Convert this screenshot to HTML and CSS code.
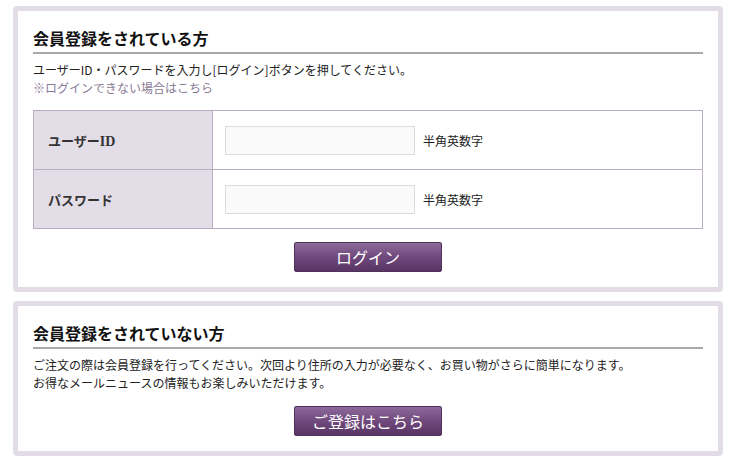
FILE: index.html
```html
<!DOCTYPE html>
<html lang="ja">
<head>
<meta charset="utf-8">
<title>ログイン</title>
<link rel="stylesheet" href="styles.css">
</head>
<body>
<div class="page">
  <section class="box">
    <h2 class="box-title">会員登録をされている方</h2>
    <p class="lead">ユーザーID・パスワードを入力し[ログイン]ボタンを押してください。<br><a class="note-link" href="#">※ログインできない場合はこちら</a></p>
    <table class="login-table">
      <tr>
        <th>ユーザー<span class="latin">ID</span></th>
        <td><input class="field" type="text"><span class="hint">半角英数字</span></td>
      </tr>
      <tr>
        <th>パスワード</th>
        <td><input class="field" type="password"><span class="hint">半角英数字</span></td>
      </tr>
    </table>
    <div class="actions actions-login"><button class="btn" type="button">ログイン</button></div>
  </section>
  <section class="box">
    <h2 class="box-title">会員登録をされていない方</h2>
    <p class="lead">ご注文の際は会員登録を行ってください。次回より住所の入力が必要なく、お買い物がさらに簡単になります。<br>お得なメールニュースの情報もお楽しみいただけます。</p>
    <div class="actions actions-register"><button class="btn" type="button">ご登録はこちら</button></div>
  </section>
</div>
</body>
</html>
```
FILE: styles.css
```css
html, body {
  margin: 0;
  padding: 0;
  background: #fff;
}
body {
  font-family: "Noto Sans CJK JP", "Noto Sans", sans-serif;
  color: #222;
  font-size: 12px;
}
.page {
  padding: 6px 8px 0 13px;
  display: flex;
  flex-direction: column;
  gap: 9px;
}
.box {
  border: 5px solid #e2dce6;
  border-radius: 4px;
  background: #fff;
  padding: 16px 15px 15px;
}
.box-title {
  margin: 0;
  font-size: 16px;
  line-height: 23px;
  font-weight: bold;
  color: #111;
  padding-bottom: 2px;
  border-bottom: 2px solid #a9a9a9;
}
.lead {
  margin: 7px 0 0;
  line-height: 18px;
  font-size: 12px;
  color: #222;
}
.note-link {
  color: #8a7a96;
  text-decoration: none;
}
.login-table {
  width: 100%;
  margin-top: 13px;
  border-collapse: collapse;
  border: 1px solid #b8aec0;
}
.login-table th,
.login-table td {
  border: 1px solid #b8aec0;
  height: 58px;
  padding: 0;
  vertical-align: middle;
}
.login-table th {
  width: 164px;
  background: #e3dde7;
  text-align: left;
  padding-left: 14px;
  font-size: 13px;
  font-weight: bold;
  color: #333;
}
.latin {
  font-family: "Liberation Serif", serif;
  font-size: 14px;
}
.login-table td {
  padding-left: 12px;
}
.field {
  box-sizing: border-box;
  width: 190px;
  height: 29px;
  border: 1px solid #dcdcdc;
  background: #fafafa;
  vertical-align: middle;
  margin: 0;
}
.hint {
  margin-left: 8px;
  vertical-align: middle;
  font-size: 12px;
  color: #222;
}
.actions {
  display: flex;
  justify-content: center;
}
.actions-login {
  margin-top: 13px;
}
.actions-register {
  margin-top: 14px;
}
.btn {
  box-sizing: border-box;
  width: 148px;
  height: 30px;
  border: 1px solid #4f3159;
  border-radius: 2px;
  background: linear-gradient(to bottom, #8d6a9b 0%, #70497d 50%, #583564 100%);
  color: #fff;
  font-family: "Noto Sans CJK JP", sans-serif;
  font-size: 16px;
  line-height: 28px;
  padding: 0;
  cursor: pointer;
}
```
